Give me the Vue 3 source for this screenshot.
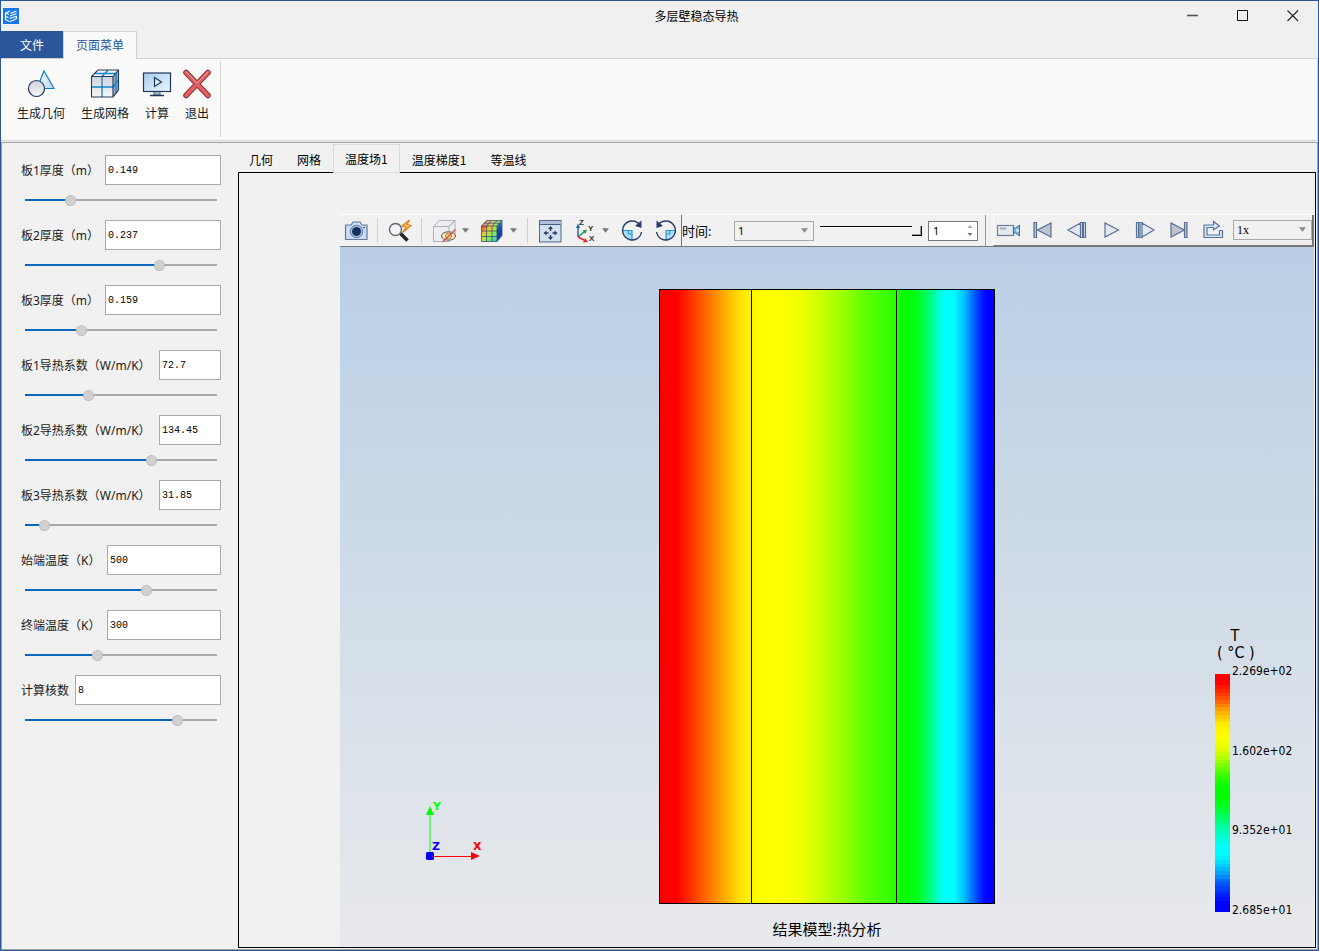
<script setup>
import { reactive, ref } from 'vue'

const fields = reactive([
  { id: 'd1', label: '板1厚度（m）', value: '0.149', pos: 22, size: 'short' },
  { id: 'd2', label: '板2厚度（m）', value: '0.237', pos: 71, size: 'short' },
  { id: 'd3', label: '板3厚度（m）', value: '0.159', pos: 28, size: 'short' },
  { id: 'k1', label: '板1导热系数（W/m/K）', value: '72.7', pos: 32, size: 'long' },
  { id: 'k2', label: '板2导热系数（W/m/K）', value: '134.45', pos: 67, size: 'long' },
  { id: 'k3', label: '板3导热系数（W/m/K）', value: '31.85', pos: 8, size: 'long' },
  { id: 't1', label: '始端温度（K）', value: '500', pos: 64, size: 'medium' },
  { id: 't2', label: '终端温度（K）', value: '300', pos: 37, size: 'medium' },
  { id: 'n', label: '计算核数', value: '8', pos: 81, size: 'tiny' }
])

const tabs = ['几何', '网格', '温度场1', '温度梯度1', '等温线']
const activeTab = ref(2)
const step = ref(1)
const frame = ref(100)

const stops = [
  [0, 255, 0, 0], [0.03, 255, 0, 0], [0.1, 255, 85, 0], [0.15, 255, 170, 0],
  [0.21, 255, 240, 0], [0.26, 255, 255, 0], [0.31, 230, 255, 0], [0.35, 176, 255, 0],
  [0.4, 96, 255, 0], [0.45, 24, 255, 0], [0.49, 0, 255, 0], [0.52, 0, 255, 0],
  [0.57, 0, 255, 48], [0.63, 0, 255, 140], [0.69, 0, 255, 215], [0.73, 0, 255, 255],
  [0.77, 0, 250, 255], [0.81, 0, 205, 255], [0.85, 0, 150, 255], [0.88, 0, 95, 255],
  [0.94, 0, 28, 255], [0.97, 0, 0, 255], [1, 0, 0, 255]
]

function colorAt(t) {
  let i = 0
  while (i < stops.length - 2 && t > stops[i + 1][0]) i++
  const a = stops[i]
  const b = stops[i + 1]
  const f = (t - a[0]) / (b[0] - a[0])
  const c = [1, 2, 3].map((n) => Math.round(a[n] + (b[n] - a[n]) * f))
  return `rgb(${c.join(',')})`
}

const bands = Array.from({ length: 64 }, (_, i) => colorAt(i / 63))
const legendLabels = ['2.269e+02', '1.602e+02', '9.352e+01', '2.685e+01']
</script>

<template>
  <div class="window">
    <header class="titlebar">
      <svg class="logo" viewBox="0 0 16 16" aria-hidden="true">
        <rect width="16" height="16" fill="#1677e8" />
        <path d="M2.500 5L7 3M2.500 5V11.500L6 13.500M2.500 5L6 6.500M3 8.500L5.500 9.500M7.500 5.500L13.500 3M7 8L13.500 5.500M6.500 10.500L10 9.500L13.500 8M6.500 13.500L10 12.500L13.500 10.500V8" fill="none" stroke="#fff" stroke-width="1.200" />
      </svg>
      <h1>多层壁稳态导热</h1>
      <button class="win" aria-label="最小化"><svg viewBox="0 0 12 12"><path d="M0 5.500H11" stroke="#555" stroke-width="1.600" /></svg></button>
      <button class="win" aria-label="最大化"><svg viewBox="0 0 12 12"><path d="M.5.500H10.500V10.500H.5Z" fill="none" stroke="#111" /></svg></button>
      <button class="win" aria-label="关闭"><svg viewBox="0 0 12 12"><path d="M.5.500L11 11M11 .5L.5 11" stroke="#222" stroke-width="1.100" /></svg></button>
    </header>

    <nav class="ribbon-tabs">
      <button class="file">文件</button>
      <button class="page-menu">页面菜单</button>
    </nav>

    <section class="ribbon">
      <div class="ribbon-group">
        <button>
          <svg viewBox="0 0 30 30">
            <defs>
              <linearGradient id="gTri" x1="0" y1="0" x2="1" y2="1"><stop offset="0" stop-color="#fff" /><stop offset="1" stop-color="#b5d9f5" /></linearGradient>
              <linearGradient id="gCir" x1="0" y1="0" x2="0" y2="1"><stop offset="0" stop-color="#d0d3da" /><stop offset="1" stop-color="#f5f6f8" /></linearGradient>
            </defs>
            <path d="M18 2L28 19.500H11Z" fill="url(#gTri)" stroke="#127bc9" stroke-width="1.200" />
            <circle cx="10.500" cy="19.500" r="8" fill="url(#gCir)" stroke="#20365f" stroke-width="1.200" />
          </svg>
          <span>生成几何</span>
        </button>
        <button>
          <svg viewBox="0 0 30 30">
            <path d="M1.500 7.500L8 1H28.500L23.500 7.500Z" fill="#f3f5f9" />
            <path d="M1.500 7.500H23V28H1.500Z" fill="url(#gCir)" />
            <path d="M23 7.500L28.500 1V21L23 28Z" fill="#96a8c2" />
            <path d="M12 28V7.500L18 1M1.500 18H23L28.500 11M4.500 4.500H26V24.500" fill="none" stroke="#1683c6" stroke-width="1.300" />
            <path d="M1.500 7.500L8 1H28.500V21L23 28H1.500ZM1.500 7.500H23V28M23 7.500L28.500 1" fill="none" stroke="#273a5c" stroke-width="1.100" />
          </svg>
          <span>生成网格</span>
        </button>
        <button>
          <svg viewBox="0 0 30 30">
            <defs><linearGradient id="gScr" x1="0" y1="0" x2="1" y2="1"><stop offset="0" stop-color="#a9cdee" /><stop offset="1" stop-color="#edf6fd" /></linearGradient></defs>
            <path d="M12 22H18V26H12Z" fill="#aab4c4" stroke="#566680" />
            <path d="M8 26.500H22" stroke="#20365f" stroke-width="1.500" />
            <rect x="1.500" y="4" width="27" height="18.500" fill="url(#gScr)" stroke="#20365f" stroke-width="1.200" />
            <path d="M12.500 8.500L19.500 13L12.500 17.500Z" fill="#dcebf8" stroke="#20365f" stroke-width="1.200" />
          </svg>
          <span>计算</span>
        </button>
        <button>
          <svg viewBox="0 0 30 30">
            <path d="M4 3.500L26 26.500M26 3.500L4 26.500" stroke="#962f37" stroke-width="5.600" stroke-linecap="round" />
            <path d="M4 3.500L26 26.500M26 3.500L4 26.500" stroke="#de6264" stroke-width="3.600" stroke-linecap="round" />
            <path d="M4 3L15 14L26 3" fill="none" stroke="#f09a98" stroke-width="1" stroke-linecap="round" />
          </svg>
          <span>退出</span>
        </button>
      </div>
    </section>

    <main class="workspace">
      <form class="sidebar" @submit.prevent>
        <div v-for="f in fields" :key="f.id" class="field">
          <div class="field-row">
            <label :for="f.id" :class="f.size">{{ f.label }}</label>
            <input :id="f.id" v-model="f.value" type="text" />
          </div>
          <input
            v-model="f.pos"
            class="slider"
            type="range"
            min="0"
            max="100"
            :aria-label="f.label"
            :style="{ '--fill': f.pos + '%' }"
          />
        </div>
      </form>

      <section class="results">
        <div class="tabs" role="tablist">
          <button
            v-for="(t, i) in tabs"
            :key="t"
            role="tab"
            :aria-selected="i === activeTab"
            :class="{ active: i === activeTab }"
            @click="activeTab = i"
          >{{ t }}</button>
        </div>

        <div class="page">
          <div class="toolbar">
            <div class="tools">
              <button class="tool" aria-label="截图">
                <svg viewBox="0 0 28 28">
                  <path d="M3.500 8H9L11 5H18L20 8H25V22.500H3.500Z" fill="#c9def2" stroke="#627999" stroke-width="1.200" stroke-linejoin="round" />
                  <circle cx="14.500" cy="14.500" r="6.200" fill="#aec9e4" stroke="#5d789d" />
                  <circle cx="14.500" cy="14.500" r="4.500" fill="#142f60" />
                  <circle cx="22" cy="10.500" r=".8" fill="#20365f" />
                </svg>
              </button>
              <i class="sep"></i>
              <button class="tool" aria-label="快速缩放">
                <svg viewBox="0 0 28 28">
                  <path d="M14.500 16.500L21.500 23.500" stroke="#252525" stroke-width="3.600" />
                  <circle cx="9.500" cy="12.500" r="6" fill="#f2f4f7" stroke="#666" stroke-width="1.400" />
                  <path d="M23.500 3L16 9L20 10L16.500 15.500L25 8.500L21 7.500Z" fill="#ffd36a" stroke="#e57919" stroke-width="1.200" />
                </svg>
              </button>
              <i class="sep"></i>
              <div class="split">
                <button class="tool" aria-label="显示模式">
                  <svg viewBox="0 0 28 28">
                    <path d="M3.500 9.500L9 3.500H25L19 9.500ZM3.500 9.500H19V24.500H3.500ZM19 9.500L25 3.500V18L19 24.500" fill="#eceef2" stroke="#aab1bd" stroke-linejoin="round" />
                    <ellipse cx="18.500" cy="19" rx="7" ry="4.200" fill="#fae7b2" stroke="#555" />
                    <circle cx="18.500" cy="19" r="3" fill="#f0cf8c" stroke="#a08a60" />
                    <path d="M12.500 25L25.500 12.500" stroke="#dc4b38" stroke-width="1.200" />
                  </svg>
                </button>
                <button class="caret" aria-label="显示模式选项"><svg viewBox="0 0 8 5"><path d="M0 0H8L4 5Z" /></svg></button>
              </div>
              <div class="split">
                <button class="tool" aria-label="云图">
                  <svg viewBox="0 0 28 28">
                    <defs>
                      <linearGradient id="gRain" x1="0" y1="0" x2="1" y2="1"><stop offset="0" stop-color="#e82a20" /><stop offset=".3" stop-color="#f5c43c" /><stop offset=".6" stop-color="#8bee4f" /><stop offset="1" stop-color="#22c8e8" /></linearGradient>
                      <linearGradient id="gTop" x1="0" y1="0" x2="1" y2="0"><stop offset="0" stop-color="#e97568" /><stop offset=".5" stop-color="#ddd56c" /><stop offset="1" stop-color="#76d87b" /></linearGradient>
                      <linearGradient id="gSide" x1="0" y1="0" x2="0" y2="1"><stop offset="0" stop-color="#29a1d8" /><stop offset=".5" stop-color="#1642b5" /><stop offset="1" stop-color="#243aaf" /></linearGradient>
                    </defs>
                    <path d="M3.500 9L8.500 3.500H24L19 9Z" fill="url(#gTop)" />
                    <path d="M3.500 9H19V24.500H3.500Z" fill="url(#gRain)" />
                    <path d="M19 9L24 3.500V18.500L19 24.500Z" fill="url(#gSide)" />
                    <path d="M3.500 9L8.500 3.500H24V18.500L19 24.500H3.500ZM3.500 9H19V24.500M19 9L24 3.500M8.500 24.500V9L13.500 3.500M14 24.500V9L19 3.500M3.500 14H19L24 8.500M3.500 19.500H19L24 13.500M6 6.200H21.500V21.500" fill="none" stroke="#30415f" stroke-width=".7" />
                  </svg>
                </button>
                <button class="caret" aria-label="云图选项"><svg viewBox="0 0 8 5"><path d="M0 0H8L4 5Z" /></svg></button>
              </div>
              <i class="sep"></i>
              <button class="tool" aria-label="适应窗口">
                <svg viewBox="0 0 28 28">
                  <rect x="3.500" y="3.500" width="21.500" height="21.500" fill="#d2dfed" stroke="#536684" />
                  <path d="M4 5.500H24.500" stroke="#a9bdd8" stroke-width="2.500" />
                  <path d="M4 7.500H24.500" stroke="#455e86" />
                  <path d="M14.500 9L17 12H12ZM14.500 23L17 20H12ZM7.500 16L10.500 13.500V18.500ZM21.500 16L18.500 13.500V18.500Z" fill="#253d66" />
                  <path d="M14.500 12V14M14.500 18V20M10 16H12.500M16.500 16H19" stroke="#253d66" stroke-width="1.500" />
                </svg>
              </button>
              <div class="split">
                <button class="tool" aria-label="视图方向">
                  <svg viewBox="0 0 28 28">
                    <path d="M8 20V10" stroke="#275fae" stroke-width="1.500" /><path d="M8 6.500L10 11H6Z" fill="#275fae" />
                    <path d="M8 20L14 15" stroke="#1b9852" stroke-width="1.500" /><path d="M17 12.500L15.500 17L12.500 13.500Z" fill="#1b9852" />
                    <path d="M8 20L14 23" stroke="#e3282b" stroke-width="1.500" /><path d="M18 25L13 25.500L15 21Z" fill="#e3282b" />
                    <text x="9" y="8" class="axis-letter">Z</text>
                    <text x="18" y="14" class="axis-letter">Y</text>
                    <text x="19" y="24" class="axis-letter">X</text>
                  </svg>
                </button>
                <button class="caret" aria-label="视图方向选项"><svg viewBox="0 0 8 5"><path d="M0 0H8L4 5Z" /></svg></button>
              </div>
              <button class="tool" aria-label="顺时针旋转">
                <svg viewBox="0 0 28 28">
                  <path d="M4.500 13.500H14V23.500A9.500 9.500 0 0 1 4.500 13.500Z" fill="#a9def7" />
                  <path d="M4.500 13.500H14V23.500M10.500 13.500V17H14" fill="none" stroke="#2699cf" stroke-width="1.200" />
                  <path d="M21.500 7.500A9.500 9.500 0 1 0 23.500 15" fill="none" stroke="#263f68" stroke-width="1.400" />
                  <path d="M23.500 3.500V11L17 9Z" fill="#263f68" />
                </svg>
              </button>
              <button class="tool" aria-label="逆时针旋转">
                <svg viewBox="0 0 28 28">
                  <path d="M14 13.500H23.500A9.500 9.500 0 0 1 14 23.500Z" fill="#a9def7" />
                  <path d="M23.500 13.500H14V23.500M17.500 13.500V17H14" fill="none" stroke="#2699cf" stroke-width="1.200" />
                  <path d="M6.500 7.500A9.500 9.500 0 1 1 4.500 15" fill="none" stroke="#263f68" stroke-width="1.400" />
                  <path d="M4.500 3.500V11L11 9Z" fill="#263f68" />
                </svg>
              </button>
            </div>

            <div class="time">
              <label for="time">时间:</label>
              <div class="select">
                <select id="time"><option>1</option></select>
                <svg viewBox="0 0 8 5"><path d="M0 0H8L4 5Z" /></svg>
              </div>
              <input v-model="frame" class="frame" type="range" min="0" max="100" aria-label="时间步" />
              <div class="spin">
                <input v-model="step" type="number" aria-label="步数" />
                <svg viewBox="0 0 6 14"><path d="M3 1L5.500 4H.5Z" fill="#aaa" /><path d="M3 12L5.500 9H.5Z" fill="#777" /></svg>
              </div>
            </div>

            <div class="playback">
              <button class="tool" aria-label="录制">
                <svg viewBox="0 0 28 28">
                  <rect x="2.500" y="9.500" width="16" height="10" fill="#e5e8ed" stroke="#6b7f9f" stroke-width="1.200" />
                  <path d="M5 12.500H11" stroke="#a5adba" stroke-width="2" />
                  <path d="M18.500 12L20.500 12L24.500 9V20L20.500 17H18.500Z" fill="#79b6df" stroke="#426b98" />
                  <path d="M21 14.500H24" stroke="#dff2ff" stroke-width="2" />
                </svg>
              </button>
              <button class="tool" aria-label="首帧"><svg viewBox="0 0 28 28" class="play"><path d="M5 6.500H7.500V21.500H5ZM22 7V21L8.500 14Z" fill="#bcc4d0" /></svg></button>
              <button class="tool" aria-label="上一帧"><svg viewBox="0 0 28 28" class="play"><path d="M17.500 7V21L5 14ZM17.500 6.500H19.500V21.500H17.500ZM20.500 6.500H22.500V21.500H20.500Z" /></svg></button>
              <button class="tool" aria-label="播放"><svg viewBox="0 0 28 28" class="play"><path d="M8 7V21L21.500 14Z" /></svg></button>
              <button class="tool" aria-label="下一帧"><svg viewBox="0 0 28 28" class="play"><path d="M5.500 6.500H7.500V21.500H5.500ZM9 6.500H11V21.500H9ZM11 7V21L23 14Z" /></svg></button>
              <button class="tool" aria-label="末帧"><svg viewBox="0 0 28 28" class="play"><path d="M6 7V21L19.500 14ZM19.500 6.500H22V21.500H19.500Z" fill="#bcc4d0" /></svg></button>
              <button class="tool" aria-label="循环">
                <svg viewBox="0 0 28 28"><path d="M5 9H14.500V5.500L20.500 10L14.500 14V11.500H8V19H20.500V14.500H23.500V21.500H5Z" fill="#d5eaf7" stroke="#587196" stroke-width="1.200" /></svg>
              </button>
              <div class="select speed">
                <select aria-label="播放速度"><option>1x</option></select>
                <svg viewBox="0 0 8 5"><path d="M0 0H8L4 5Z" /></svg>
              </div>
            </div>
          </div>

          <div class="scene">
            <div class="model"><i class="wall-one"></i><i class="wall-two"></i></div>
            <p class="caption">结果模型:热分析</p>

            <svg class="axes" viewBox="0 0 66 70" aria-label="坐标轴">
              <path d="M10 58V16" stroke="#0f0" /><path d="M10 8L14 17H6Z" fill="#0f0" />
              <path d="M10 58.500H52" stroke="#f00" /><path d="M60 58L51 62V54Z" fill="#f00" />
              <rect x="6" y="54" width="8" height="8" rx="1.500" fill="#00f" />
              <text x="13" y="12" fill="#0f0">Y</text>
              <text x="12" y="52" fill="#00f">Z</text>
              <text x="53" y="52" fill="#f00">X</text>
            </svg>

            <div class="legend">
              <div class="legend-title">T</div>
              <div class="legend-unit">( °C )</div>
              <div class="legend-body">
                <svg class="bar" viewBox="0 0 15 64" preserveAspectRatio="none" shape-rendering="crispEdges">
                  <rect v-for="(c, i) in bands" :key="i" x="0" :y="i" width="15" height="1" :fill="c" />
                </svg>
                <div class="legend-labels"><span v-for="l in legendLabels" :key="l">{{ l }}</span></div>
              </div>
            </div>
          </div>
        </div>
      </section>
    </main>
  </div>
</template>

<style>
body { margin: 0; }
</style>

<style scoped>
* { box-sizing: border-box; }
.window {
  display: flex;
  flex-direction: column;
  height: 100vh;
  min-height: 760px;
  border: 1px solid #2b579a;
  background: #f0f0f0;
  color: #1a1a1a;
  font: 12px/18px "Noto Sans", "Noto Sans CJK SC", sans-serif;
}
button {
  margin: 0;
  padding: 0;
  border: 0;
  background: none;
  color: inherit;
  font: inherit;
}
input, select { font: inherit; color: inherit; border-radius: 0; margin: 0; outline: 0; }
.titlebar { display: flex; align-items: center; height: 30px; flex: none; }
.logo { width: 16px; height: 16px; margin-left: 2px; }
h1 { flex: 1; margin: 0; padding: 2px 0 0 206px; text-align: center; font-size: 12px; font-weight: 400; color: #000; }
.win { width: 50px; height: 30px; display: flex; align-items: center; justify-content: center; }
.win svg { width: 12px; height: 12px; }
.ribbon-tabs { display: flex; flex: none; height: 28px; position: relative; z-index: 1; }
.file { width: 62px; height: 27px; padding-top: 2px; background: #2b579a; color: #fff; }
.page-menu {
  width: 74px;
  height: 28px;
  background: #fafafa;
  color: #2b579a;
  border: 1px solid #d2d2d2;
  border-bottom: 0;
}
.ribbon { flex: none; height: 83px; margin-top: -1px; background: #fafafa; border: 1px solid #d2d2d2; border-left: 0; }
.ribbon-group { display: inline-flex; height: 76px; margin-top: 2px; padding: 0 3px 0 8px; border-right: 1px solid #d2d2d2; }
.ribbon-group button { display: flex; flex-direction: column; align-items: center; padding: 8px 8px 0; }
.ribbon-group svg { width: 30px; height: 30px; margin: 0 -3px; }
.ribbon-group span { margin-top: 6px; }
.workspace { display: flex; flex: 1; min-height: 0; margin-top: 1px; border: 1px solid #a0a0a0; background: #f1f1f1; }
.sidebar { flex: none; width: 236px; padding: 12px 17px 0 19px; }
.field { height: 65px; }
.field-row { display: flex; align-items: center; height: 30px; }
label { white-space: nowrap; padding-top: 2px; }
.field-row .short { width: 84px; }
.field-row .medium { width: 86px; }
.field-row .long { width: 138px; }
.field-row .tiny { width: 54px; }
.field-row input {
  flex: 1;
  min-width: 0;
  height: 30px;
  padding: 0 2px;
  border: 1px solid #a9a9a9;
  background: #fff;
  color: #000;
  font: 10px/14px "Liberation Mono", monospace;
}
.slider { appearance: none; display: block; width: 192px; height: 12px; margin: 9px 0 0 4px; background: none; }
.slider::-webkit-slider-runnable-track {
  height: 2px;
  background: linear-gradient(to right, #0b69bd var(--fill), #a9a9a9 var(--fill));
}
.slider::-webkit-slider-thumb {
  appearance: none;
  width: 11px;
  height: 11px;
  margin-top: -4px;
  border: 1px dotted #aaa;
  border-radius: 50%;
  background: #d0d0d0;
}
.results { flex: 1; min-width: 0; display: flex; flex-direction: column; margin: 1px 1px 1px 0; }
.tabs { display: flex; position: relative; z-index: 1; height: 29px; flex: none; margin-left: -1px; font-family: "Noto Sans CJK SC", sans-serif; }
.tabs button { padding: 2px 12px 0; color: #000; white-space: nowrap; }
.tabs .active { padding: 1px 11px 0; border: 1px solid #d9d9d9; background: #f1f1f1; }
.page {
  flex: 1;
  min-height: 0;
  display: flex;
  flex-direction: column;
  margin-top: -1px;
  padding: 41px 1px 0 101px;
  border: 1px solid #000;
}
.toolbar { flex: none; display: flex; height: 33px; border-top: 1px solid #fff; border-bottom: 1px solid #777; background: #f1f1f1; }
.tools { display: flex; align-items: center; gap: 6px; padding: 0 1px 0 2px; border-right: 1px solid #777; }
.tool { flex: none; width: 28px; height: 28px; }
.tool svg { display: block; width: 28px; height: 28px; }
.split { display: flex; }
.caret { width: 14px; display: flex; align-items: center; justify-content: center; }
.caret svg { width: 7px; height: 5px; fill: #777; }
.sep { width: 1px; height: 25px; margin: 0 2px 0 1px; background: #cfcfcf; }
.axis-letter { font: bold 8px "Liberation Sans", sans-serif; fill: #333; }
.time { display: flex; align-items: center; padding-right: 7px; border-right: 1px solid #999; }
.time label { width: 52px; padding: 0; font-size: 13px; color: #000; }
.select { position: relative; width: 80px; height: 20px; }
.select select {
  appearance: none;
  display: block;
  width: 100%;
  height: 20px;
  padding: 0 3px;
  border: 1px solid #a9a9a9;
  background: #f1f1f1;
  color: #000;
  font-size: 11px;
}
.select svg { position: absolute; right: 6px; top: 7px; width: 7px; height: 5px; fill: #888; pointer-events: none; }
.frame { appearance: none; width: 102px; height: 20px; margin: 0 6px; background: none; }
.frame::-webkit-slider-runnable-track { height: 2px; margin-bottom: 8px; background: linear-gradient(#000 50%, #fff 50%); }
.frame::-webkit-slider-thumb {
  appearance: none;
  width: 10px;
  height: 10px;
  background: #f1f1f1;
  border: solid #000;
  border-width: 0 1px 1px 0;
  box-shadow: inset -1px -1px #999;
}
.spin { position: relative; width: 50px; height: 20px; }
.spin input { appearance: textfield; display: block; width: 50px; height: 20px; padding: 0 4px; border: 1px solid #777; background: #fff; color: #000; font-size: 11px; }
.spin input::-webkit-inner-spin-button { appearance: none; }
.spin svg { position: absolute; right: 5px; top: 3px; width: 6px; height: 14px; }
.playback {
  flex: 1;
  min-width: 0;
  display: flex;
  align-items: center;
  gap: 6px;
  margin-left: 7px;
  padding-left: 1px;
  border-left: 1px solid #fff;
  border-right: 2px solid #777;
  border-bottom: 1px solid #777;
}
.play { fill: #e2e9f1; stroke: #566f94; stroke-width: 1.2; }
.speed { flex: 1; }
.speed select { font: 12px/16px "Liberation Serif", serif; }
.scene {
  position: relative;
  flex: 1;
  min-height: 0;
  display: flex;
  flex-direction: column;
  align-items: center;
  padding-top: 42px;
  background: linear-gradient(#b9cee5, #d2dde8 52%, #e8e9ec);
}
.model {
  position: relative;
  flex: 1;
  width: 34.5%;
  border: 1px solid #000;
  background: linear-gradient(to right,
    #f00 0, #f00 5%, #ff3000 9%, #ff6a00 14%, #ffaa00 19%, #ffe000 24%, #fff400 27%,
    #ff0 31%, #ff0 36%, #f0ff00 42%, #c4ff00 49%, #90ff00 56%, #5aff00 62%,
    #34ff00 69%, #10ff00 72%, #0f0 74%, #00ff10 76%, #00ff30 78%, #00ff80 81%, #00ffc0 83%,
    #0ff 85%, #0ff 88%, #00c0ff 91%, #0080ff 93%, #0040ff 95%, #0010ff 97%, #00f 98%);
}
.wall-one, .wall-two { position: absolute; top: 0; bottom: 0; width: 1px; background: #000; }
.wall-one { left: 27.2%; }
.wall-two { left: 70.6%; }
.caption { margin: 0; height: 43px; padding-top: 14px; font-size: 15px; line-height: 22px; color: #000; }
.axes { position: absolute; left: 80px; bottom: 79px; width: 66px; height: 70px; font: bold 11px "DejaVu Sans", sans-serif; }
.legend { position: absolute; right: 21px; bottom: 35px; width: 78px; color: #000; font-family: "DejaVu Sans Condensed", "DejaVu Sans", sans-serif; }
.legend-title { width: 40px; text-align: center; font-size: 16px; line-height: 16px; }
.legend-unit { padding-left: 2px; font-size: 16px; line-height: 18px; }
.legend-body { display: flex; height: 238px; margin-top: 12px; }
.bar { width: 15px; height: 238px; }
.legend-labels { display: flex; flex-direction: column; justify-content: space-between; height: 252px; margin: -9px 0 0 2px; font-size: 12px; line-height: 13px; }
</style>
